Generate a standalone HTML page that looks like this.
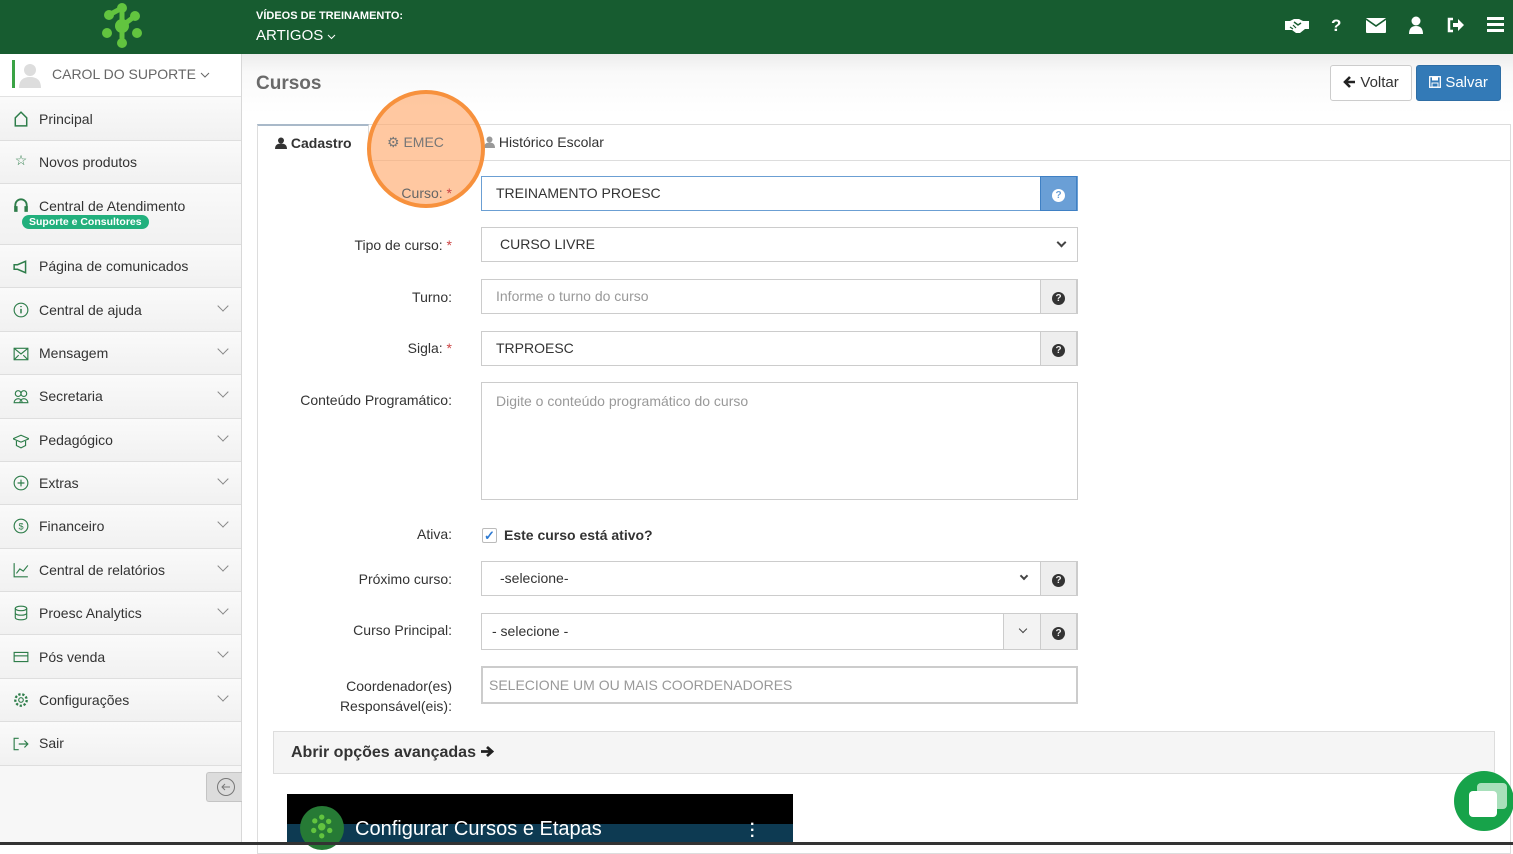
<!DOCTYPE html>
<html><head><meta charset="utf-8"><style>
*{box-sizing:border-box;margin:0;padding:0}
body{width:1513px;height:845px;overflow:hidden;font-family:"Liberation Sans",sans-serif;font-size:14px;color:#333;background:#fff;position:relative}
.abs{position:absolute}
#hdr{left:0;top:0;width:1513px;height:54px;background:#175c30}
#side{left:0;top:54px;width:242px;height:791px;background:#f7f7f7;border-right:1px solid #d8d8d8}
.it{position:absolute;left:0;width:241px;border-bottom:1px solid #dedede;background:linear-gradient(#fafafa,#f1f1f1);font-size:14px;color:#333}
.it span.t{position:absolute;left:39px}
.it .ic{position:absolute;left:13px;width:16px;height:16px;color:#2e7d4a;font-size:14px;text-align:center}
.it .ch{position:absolute;right:14px;width:8px;height:8px;border-right:1px solid #888;border-bottom:1px solid #888;transform:rotate(45deg)}
.lbl{position:absolute;right:1061px;text-align:right;font-size:14px;color:#333}
.inp{position:absolute;left:481px;width:597px;height:35px;border:1px solid #ccc;background:#fff;font-size:14px;padding-left:14px;line-height:33px}
.add{position:absolute;right:0;top:-1px;width:37px;height:35px;background:#eee;border:1px solid #ccc;text-align:center}
.q{display:inline-block;width:13px;height:13px;border-radius:50%;background:#333;color:#eee;font-size:10px;font-weight:bold;line-height:13px;margin-top:10px}
.sel{position:absolute;right:12px;top:11px;width:7px;height:7px;border-right:2px solid #444;border-bottom:2px solid #444;transform:rotate(45deg)}
.ph{color:#999}
</style></head><body>
<div id="hdr" class="abs">
<svg class="abs" style="left:100px;top:3px" width="45" height="47" viewBox="100 3 45 47">
<g stroke="#62c43f" stroke-width="5" fill="none"><line x1="122" y1="8" x2="109" y2="15"/><line x1="122" y1="8" x2="122" y2="26"/><line x1="135" y1="16" x2="122" y2="26"/><line x1="122" y1="26" x2="122" y2="43"/></g>
<g fill="#62c43f"><circle cx="122" cy="8" r="5"/><circle cx="109" cy="15" r="5"/><circle cx="135" cy="16" r="5"/><circle cx="122" cy="26" r="7"/><circle cx="107" cy="33" r="5"/><circle cx="137" cy="33" r="5"/><circle cx="122" cy="43" r="5"/></g></svg>
<div class="abs" style="left:256px;top:10px;color:#fff;font-size:11px;font-weight:bold">VÍDEOS DE TREINAMENTO:</div>
<div class="abs" style="left:256px;top:27px;color:#fff;font-size:15px">ARTIGOS <svg width="9" height="6"><path d="M1 1l3.5 3.5L8 1" stroke="#fff" fill="none"/></svg></div>
<div class="abs" style="left:1284px;top:16px;color:#fff;font-size:17px;font-weight:bold">
<svg style="position:absolute;left:0;top:1px" width="26" height="17"><path d="M1 4h5l4-2h5l4 2h6v8h-4l-5 4h-4l-4-3h-3H1z" fill="#fff"/><path d="M10 5l4 3 3-2" stroke="#175c30" stroke-width="1.5" fill="none"/><path d="M6 10l3 2M9 8l3 3" stroke="#175c30" stroke-width="1.2"/></svg>
<span style="position:absolute;left:47px">?</span>
<svg style="position:absolute;left:82px;top:2px" width="20" height="15"><rect width="20" height="15" rx="1" fill="#fff"/><path d="M0 1l10 7 10-7" stroke="#175c30" stroke-width="1.6" fill="none"/></svg>
<svg style="position:absolute;left:124px;top:0" width="16" height="18"><circle cx="8" cy="5" r="4.5" fill="#fff"/><path d="M1 18 Q1 10 8 10 Q15 10 15 18Z" fill="#fff"/></svg>
<svg style="position:absolute;left:162px;top:1px" width="18" height="16"><path d="M7 2H3v12h4" stroke="#fff" stroke-width="2.5" fill="none"/><path d="M7 6h5V2l6 6-6 6v-4H7z" fill="#fff"/></svg>
<svg style="position:absolute;left:203px;top:1px" width="17" height="15"><rect y="0" width="17" height="3" fill="#fff"/><rect y="6" width="17" height="3" fill="#fff"/><rect y="12" width="17" height="3" fill="#fff"/></svg>
</div>
</div>
<div id="side" class="abs">
<div class="it" style="top:0;height:43px;background:#fff;border-bottom:1px solid #e2e2e2">
<div class="abs" style="left:12px;top:6px;width:3px;height:28px;background:#3aa345"></div>
<svg class="abs" style="left:18px;top:8px" width="24" height="26"><circle cx="12" cy="8" r="6" fill="#ddd"/><path d="M1 26Q1 15 12 15Q23 15 23 26Z" fill="#ddd"/></svg>
<span class="abs" style="left:52px;top:12px;color:#666;font-size:14px">CAROL DO SUPORTE <svg width="10" height="7"><path d="M1 1l4 4 4-4" stroke="#666" fill="none"/></svg></span></div>
</div>
<div class="it" style="top:97px;height:44px"><svg class="ic" style="top:14px" viewBox="0 0 14 14"><path d="M2 13V6l5-5 5 5v7z" stroke="#2e7d4a" stroke-width="1.3" fill="none"/></svg><span class="t" style="top:14px">Principal</span></div>
<div class="it" style="top:141px;height:43px"><span class="ic" style="top:11px">☆</span><span class="t" style="top:13px">Novos produtos</span></div>
<div class="it" style="top:184px;height:61px"><svg class="ic" style="top:13px" viewBox="0 0 14 14"><path d="M2 9V7a5 5 0 0110 0v2" stroke="#2e7d4a" stroke-width="1.6" fill="none"/><rect x="1" y="8" width="3" height="5" fill="#2e7d4a"/><rect x="10" y="8" width="3" height="5" fill="#2e7d4a"/></svg><span class="t" style="top:14px">Central de Atendimento</span>
<span class="abs" style="left:22px;top:31px;background:#22b07d;color:#fff;font-size:10.5px;font-weight:bold;border-radius:8px;padding:1px 7px">Suporte e Consultores</span></div>
<div class="it" style="top:245px;height:43px"><svg class="ic" style="top:14px" viewBox="0 0 14 14"><path d="M1 5h3l7-3v10L4 9H1z" stroke="#2e7d4a" stroke-width="1.3" fill="none"/></svg><span class="t" style="top:13px">Página de comunicados</span></div>
<div class="it" style="top:288px;height:44px"><svg class="ic" style="top:14px" viewBox="0 0 14 14"><circle cx="7" cy="7" r="6" stroke="#2e7d4a" fill="none"/><path d="M7 6v4M7 3.5v1" stroke="#2e7d4a" stroke-width="1.3"/></svg><span class="t" style="top:14px">Central de ajuda</span><i class="ch" style="top:14px"></i></div>
<div class="it" style="top:332px;height:43px"><svg class="ic" style="top:14px" viewBox="0 0 14 14"><rect x="1" y="2" width="12" height="10" stroke="#2e7d4a" fill="none"/><path d="M1 2l6 5 6-5M1 12l4-4M13 12l-4-4" stroke="#2e7d4a" fill="none"/></svg><span class="t" style="top:13px">Mensagem</span><i class="ch" style="top:13px"></i></div>
<div class="it" style="top:375px;height:44px"><svg class="ic" style="top:14px" viewBox="0 0 14 14"><circle cx="4.5" cy="4" r="2.5" stroke="#2e7d4a" fill="none"/><circle cx="9.5" cy="4" r="2.5" stroke="#2e7d4a" fill="none"/><path d="M1 12a3.5 3.5 0 017 0zM6 12a3.5 3.5 0 017 0z" stroke="#2e7d4a" fill="none"/></svg><span class="t" style="top:13px">Secretaria</span><i class="ch" style="top:13px"></i></div>
<div class="it" style="top:419px;height:43px"><svg class="ic" style="top:14px" viewBox="0 0 14 14"><path d="M0 5l7-3 7 3-7 3zM3 7v4l4 2 4-2V7" stroke="#2e7d4a" fill="none"/></svg><span class="t" style="top:13px">Pedagógico</span><i class="ch" style="top:13px"></i></div>
<div class="it" style="top:462px;height:43px"><svg class="ic" style="top:13px" viewBox="0 0 14 14"><circle cx="7" cy="7" r="6" stroke="#2e7d4a" fill="none"/><path d="M7 4v6M4 7h6" stroke="#2e7d4a"/></svg><span class="t" style="top:13px">Extras</span><i class="ch" style="top:13px"></i></div>
<div class="it" style="top:505px;height:44px"><svg class="ic" style="top:13px" viewBox="0 0 14 14"><circle cx="7" cy="7" r="6" stroke="#2e7d4a" fill="none"/><text x="7" y="10" font-size="8" text-anchor="middle" fill="#2e7d4a">$</text></svg><span class="t" style="top:13px">Financeiro</span><i class="ch" style="top:13px"></i></div>
<div class="it" style="top:549px;height:43px"><svg class="ic" style="top:13px" viewBox="0 0 14 14"><path d="M1 1v12h12M3 10l3-4 3 2 4-5" stroke="#2e7d4a" fill="none"/></svg><span class="t" style="top:13px">Central de relatórios</span><i class="ch" style="top:13px"></i></div>
<div class="it" style="top:592px;height:43px"><svg class="ic" style="top:13px" viewBox="0 0 14 14"><ellipse cx="7" cy="3" rx="5" ry="2" stroke="#2e7d4a" fill="none"/><path d="M2 3v8c0 2.6 10 2.6 10 0V3M2 7c0 2.6 10 2.6 10 0" stroke="#2e7d4a" fill="none"/></svg><span class="t" style="top:13px">Proesc Analytics</span><i class="ch" style="top:13px"></i></div>
<div class="it" style="top:635px;height:44px"><svg class="ic" style="top:14px" viewBox="0 0 14 14"><rect x="1" y="3" width="12" height="8" stroke="#2e7d4a" fill="none"/><path d="M1 6h12" stroke="#2e7d4a"/></svg><span class="t" style="top:14px">Pós venda</span><i class="ch" style="top:13px"></i></div>
<div class="it" style="top:679px;height:43px"><svg class="ic" style="top:13px" viewBox="0 0 14 14"><circle cx="7" cy="7" r="2" stroke="#2e7d4a" fill="none"/><circle cx="7" cy="7" r="5" stroke="#2e7d4a" stroke-width="2" stroke-dasharray="2 1.5" fill="none"/></svg><span class="t" style="top:13px">Configurações</span><i class="ch" style="top:13px"></i></div>
<div class="it" style="top:722px;height:44px"><svg class="ic" style="top:14px" viewBox="0 0 14 14"><path d="M5 2H1v10h4M5 7h8M10 4l3 3-3 3" stroke="#2e7d4a" fill="none"/></svg><span class="t" style="top:13px">Sair</span></div>
<div class="abs" style="left:206px;top:772px;width:36px;height:30px;background:#dcdcdc;border:1px solid #c4c4c4;border-right:none;border-radius:3px 0 0 3px"><svg style="position:absolute;left:9px;top:4px" width="20" height="20"><circle cx="10" cy="10" r="8.5" stroke="#777" fill="none"/><path d="M14 10H6M9 7l-3 3 3 3" stroke="#777" fill="none"/></svg></div>
<div class="abs" style="left:242px;top:54px;width:1271px;height:60px;background:linear-gradient(#ececec,#f9f9f9 30%,#fff)"></div>
<div class="abs" style="left:256px;top:73px;font-size:19px;font-weight:bold;color:#6a6a6a">Cursos</div>
<div class="abs" style="left:1330px;top:65px;width:82px;height:36px;border:1px solid #ccc;border-radius:3px;background:#fff;font-size:15px;line-height:34px;text-align:center;white-space:nowrap"><svg width="13" height="12" style="vertical-align:-1px"><path d="M12 6H3M7 1L2 6l5 5" stroke="#222" stroke-width="2.6" fill="none"/></svg> Voltar</div>
<div class="abs" style="left:1416px;top:65px;width:85px;height:36px;border:1px solid #2e6da4;border-radius:3px;background:#337ab7;color:#fff;font-size:15px;line-height:34px;text-align:center;white-space:nowrap"><svg width="12" height="12" style="vertical-align:-1px"><rect x=".7" y=".7" width="10.6" height="10.6" stroke="#fff" stroke-width="1.3" fill="none"/><rect x="3" y="1" width="6" height="3.5" fill="#fff"/><rect x="3" y="7" width="6" height="4" stroke="#fff" fill="none"/></svg> Salvar</div>
<div class="abs" style="left:257px;top:124px;width:1254px;height:730px;border:1px solid #ddd;border-top:none"></div>
<div class="abs" style="left:257px;top:160px;width:1254px;height:1px;background:#ddd"></div>
<div class="abs" style="left:257px;top:124px;width:112px;height:37px;background:#fff;border:1px solid #ddd;border-top:2px solid #a9b9c9;border-bottom:none"></div>
<div class="abs" style="left:369px;top:124px;width:1142px;height:1px;background:#ddd"></div>
<div class="abs" style="left:275px;top:135px;font-weight:bold;font-size:14px"><svg width="12" height="12" style="vertical-align:-1px"><circle cx="6" cy="3.5" r="3" fill="#333"/><path d="M0 12Q0 6.5 6 6.5T12 12z" fill="#333"/></svg> Cadastro</div>
<div class="abs" style="left:484px;top:134px;font-size:14px;color:#333"><svg width="11" height="12" style="vertical-align:-1px"><circle cx="5.5" cy="3.5" r="3" fill="#999"/><path d="M0 12Q0 6.5 5.5 6.5T11 12z" fill="#999"/></svg> Histórico Escolar</div>
<div class="abs" style="left:367px;top:90px;width:118px;height:118px;border-radius:50%;background:rgba(255,170,110,.65);border:4px solid #f7913d"></div>
<div class="abs" style="left:387px;top:134px;font-size:14px;color:#777">⚙ EMEC</div>
<div class="lbl" style="top:185px;color:#666">Curso: <span style="color:#c44">*</span></div>
<div class="inp" style="top:176px;border-color:#6b9fd3">TREINAMENTO PROESC<div class="add" style="background:#6a9fd6;border-color:#3f80c4"><span class="q" style="background:#fff;color:#6a9fd6">?</span></div></div>
<div class="lbl" style="top:237px">Tipo de curso: <span style="color:#c44">*</span></div>
<div class="inp" style="top:227px;padding-left:18px">CURSO LIVRE<i class="sel"></i></div>
<div class="lbl" style="top:289px">Turno:</div>
<div class="inp ph" style="top:279px">Informe o turno do curso<div class="add"><span class="q">?</span></div></div>
<div class="lbl" style="top:340px">Sigla: <span style="color:#c44">*</span></div>
<div class="inp" style="top:331px">TRPROESC<div class="add"><span class="q">?</span></div></div>
<div class="lbl" style="top:392px">Conteúdo Programático:</div>
<div class="inp ph" style="top:382px;height:118px;line-height:20px;padding-top:8px">Digite o conteúdo programático do curso</div>
<div class="lbl" style="top:526px">Ativa:</div>
<div class="abs" style="left:482px;top:528px;width:15px;height:15px;border:1px solid #bbb;border-radius:2px;color:#2f7bd3;font-size:13px;line-height:13px;text-align:center;font-weight:bold">✓</div>
<div class="abs" style="left:504px;top:527px;font-weight:bold">Este curso está ativo?</div>
<div class="lbl" style="top:571px">Próximo curso:</div>
<div class="inp" style="top:561px;padding-left:18px">-selecione-<i class="sel" style="right:50px;width:6px;height:6px"></i><div class="add"><span class="q">?</span></div></div>
<div class="lbl" style="top:622px">Curso Principal:</div>
<div class="inp" style="top:613px;padding-left:10px;height:37px;line-height:35px">- selecione -<div class="add" style="right:36px;width:38px;height:37px;background:#f3f3f3"><i class="sel" style="right:14px;top:12px;width:6px;height:6px;border-width:1px"></i></div><div class="add" style="height:37px"><span class="q" style="margin-top:11px">?</span></div></div>
<div class="lbl" style="top:676px;line-height:20px">Coordenador(es)<br>Responsável(eis):</div>
<div class="inp ph" style="top:666px;border:2px solid #ccc;padding-left:6px;height:38px;line-height:34px">SELECIONE UM OU MAIS COORDENADORES</div>
<div class="abs" style="left:273px;top:731px;width:1222px;height:43px;background:#f5f5f5;border:1px solid #ddd;font-size:16px;font-weight:bold;padding:12px 17px">Abrir opções avançadas <svg width="14" height="13" style="vertical-align:-1px"><path d="M1 6.5h10M7 2l5 4.5L7 11" stroke="#222" stroke-width="2.8" fill="none"/></svg></div>
<div class="abs" style="left:287px;top:794px;width:506px;height:51px;background:linear-gradient(#000 0,#000 30px,#0d3a52 30px)"></div>
<div class="abs" style="left:300px;top:806px;width:44px;height:44px;border-radius:50%;background:#267a35"></div>
<svg class="abs" style="left:310px;top:812px" width="24" height="30" viewBox="100 3 45 47"><g fill="#62c43f"><circle cx="122" cy="8" r="5"/><circle cx="109" cy="15" r="5"/><circle cx="135" cy="16" r="5"/><circle cx="122" cy="26" r="7"/><circle cx="107" cy="33" r="5"/><circle cx="137" cy="33" r="5"/><circle cx="122" cy="43" r="5"/></g></svg>
<div class="abs" style="left:355px;top:818px;color:#fff;font-size:20px">Configurar Cursos e Etapas</div>
<div class="abs" style="left:750px;top:822px;color:#fff;font-size:16px;font-weight:bold;line-height:6px">·<br>·<br>·</div>
<div class="abs" style="left:0;top:842px;width:1513px;height:3px;background:#333"></div>
<div class="abs" style="left:1454px;top:771px;width:60px;height:60px;border-radius:50%;background:#17a34a"></div>
<div class="abs" style="left:1477px;top:783px;width:30px;height:26px;border-radius:4px;background:#a8e0bb"></div>
<div class="abs" style="left:1469px;top:791px;width:28px;height:26px;border-radius:4px;background:#fff"></div>
</body></html>
